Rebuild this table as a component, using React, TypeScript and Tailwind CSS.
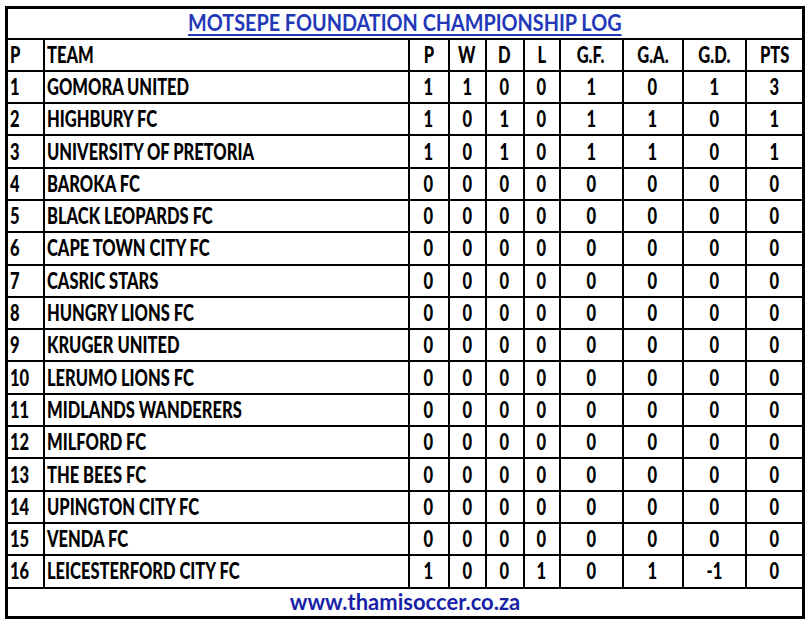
const rows: [string, number[]][] = [
  ["GOMORA UNITED", [1, 1, 0, 0, 1, 0, 1, 3]],
  ["HIGHBURY FC", [1, 0, 1, 0, 1, 1, 0, 1]],
  ["UNIVERSITY OF PRETORIA", [1, 0, 1, 0, 1, 1, 0, 1]],
  ["BAROKA FC", [0, 0, 0, 0, 0, 0, 0, 0]],
  ["BLACK LEOPARDS FC", [0, 0, 0, 0, 0, 0, 0, 0]],
  ["CAPE TOWN CITY FC", [0, 0, 0, 0, 0, 0, 0, 0]],
  ["CASRIC STARS", [0, 0, 0, 0, 0, 0, 0, 0]],
  ["HUNGRY LIONS FC", [0, 0, 0, 0, 0, 0, 0, 0]],
  ["KRUGER UNITED", [0, 0, 0, 0, 0, 0, 0, 0]],
  ["LERUMO LIONS FC", [0, 0, 0, 0, 0, 0, 0, 0]],
  ["MIDLANDS WANDERERS", [0, 0, 0, 0, 0, 0, 0, 0]],
  ["MILFORD FC", [0, 0, 0, 0, 0, 0, 0, 0]],
  ["THE BEES FC", [0, 0, 0, 0, 0, 0, 0, 0]],
  ["UPINGTON CITY FC", [0, 0, 0, 0, 0, 0, 0, 0]],
  ["VENDA FC", [0, 0, 0, 0, 0, 0, 0, 0]],
  ["LEICESTERFORD CITY FC", [1, 0, 0, 1, 0, 1, -1, 0]],
];

const heads = ["P", "W", "D", "L", "G.F.", "G.A.", "G.D.", "PTS"];

function Txt({ children, left }: { children: React.ReactNode; left?: boolean }) {
  return (
    <span className={`inline-block whitespace-nowrap scale-x-[0.75] ${left ? "origin-left" : "origin-center"}`}>
      {children}
    </span>
  );
}

const cell = "border-2 border-black p-0 h-[32.3px] leading-none";

export default function App() {
  return (
    <div className="bg-white w-[808px] h-[622px] pt-[6px] pl-[5px] font-['Lato',sans-serif] font-black text-[22px] text-black">
      <table className="table-fixed border-collapse border-[3px] border-black w-[797px]">
        <colgroup>
          <col className="w-[37px]" />
          <col className="w-[365px]" />
          <col className="w-[40px]" />
          <col className="w-[37px]" />
          <col className="w-[38px]" />
          <col className="w-[36px]" />
          <col className="w-[63px]" />
          <col className="w-[60px]" />
          <col className="w-[63px]" />
          <col className="w-[58px]" />
        </colgroup>
        <tbody>
          <tr>
            <td colSpan={10} className="border-2 border-black p-0 h-[31px] text-center leading-none">
              <span className="inline-block whitespace-nowrap scale-x-[0.9] font-bold text-[#2338b8] underline decoration-2 underline-offset-[3px]">
                MOTSEPE FOUNDATION CHAMPIONSHIP LOG
              </span>
            </td>
          </tr>
          <tr>
            <td className={`${cell} pl-[2px]`}>
              <Txt left>P</Txt>
            </td>
            <td className={`${cell} pl-[2px]`}>
              <Txt left>TEAM</Txt>
            </td>
            {heads.map((h) => (
              <td key={h} className={`${cell} text-center`}>
                <Txt>{h}</Txt>
              </td>
            ))}
          </tr>
          {rows.map(([team, vals], i) => (
            <tr key={team}>
              <td className={`${cell} pl-[2px]`}>
                <Txt left>{i + 1}</Txt>
              </td>
              <td className={`${cell} pl-[2px]`}>
                <Txt left>{team}</Txt>
              </td>
              {vals.map((v, j) => (
                <td key={j} className={`${cell} text-center`}>
                  <Txt>{v}</Txt>
                </td>
              ))}
            </tr>
          ))}
          <tr>
            <td colSpan={10} className="border-2 border-black p-0 h-[30px] text-center leading-none">
              <span className="inline-block whitespace-nowrap font-bold text-[#1a1fa8]">www.thamisoccer.co.za</span>
            </td>
          </tr>
        </tbody>
      </table>
    </div>
  );
}
